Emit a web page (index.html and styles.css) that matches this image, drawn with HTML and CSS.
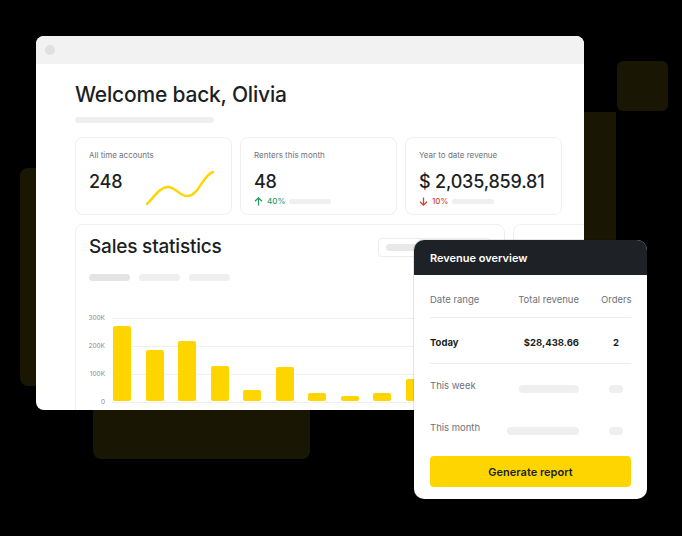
FILE: index.html
```html
<!DOCTYPE html>
<html lang="en">
<head>
    <meta charset="UTF-8">
    <meta name="viewport" content="width=device-width, initial-scale=1.0">
    <title>Welcome back, Olivia</title>
    <link rel="stylesheet" href="styles.css">
</head>
<body>

<div class="stage">
    <!-- dim yellow blocks behind the windows -->
    <div class="block block-square"></div>
    <div class="block block-column"></div>
    <div class="block block-left"></div>
    <div class="block block-bottom"></div>

    <div class="window">
        <div class="window-bar"><span class="dot"></span></div>
        <div class="content">
            <h1>Welcome back, Olivia</h1>
            <div class="skel skel-sub"></div>

            <div class="stats">
                <div class="stat">
                    <div class="stat-label">All time accounts</div>
                    <div class="stat-main">
                        <div class="stat-value">248</div>
                        <svg class="spark" width="72" height="38" viewBox="0 0 72 38">
                            <path d="M2 35 C9 28 15 18 23 18 C31 18 35 28 43 27 C54 26 58 6 68 3" fill="none" stroke="#ffd500" stroke-width="2.4" stroke-linecap="round"/>
                        </svg>
                    </div>
                </div>
                <div class="stat">
                    <div class="stat-label">Renters this month</div>
                    <div class="stat-value">48</div>
                    <div class="stat-change up">
                        <svg width="9" height="9" viewBox="0 0 9 9"><path d="M4.5 8.5 V1 M1 4.3 L4.5 0.9 L8 4.3" fill="none" stroke="currentColor" stroke-width="1.3"/></svg>
                        <span>40%</span>
                        <div class="skel skel-change"></div>
                    </div>
                </div>
                <div class="stat">
                    <div class="stat-label">Year to date revenue</div>
                    <div class="stat-value">$ 2,035,859.81</div>
                    <div class="stat-change down">
                        <svg width="9" height="9" viewBox="0 0 9 9"><path d="M4.5 0.5 V8 M1 4.7 L4.5 8.1 L8 4.7" fill="none" stroke="currentColor" stroke-width="1.3"/></svg>
                        <span>10%</span>
                        <div class="skel skel-change"></div>
                    </div>
                </div>
            </div>

            <div class="row2">
                <div class="sales">
                    <div class="sales-head">
                        <h2>Sales statistics</h2>
                        <div class="fake-select"><div class="skel skel-select"></div></div>
                    </div>
                    <div class="tabs">
                        <div class="skel tab tab-active"></div>
                        <div class="skel tab"></div>
                        <div class="skel tab"></div>
                    </div>
                    <div class="chart">
                        <div class="axis">
                            <span>300K</span>
                            <span>200K</span>
                            <span>100K</span>
                            <span>0</span>
                        </div>
                        <div class="plot">
                            <div class="bar" style="height: 75px"></div>
                            <div class="bar" style="height: 51px"></div>
                            <div class="bar" style="height: 60px"></div>
                            <div class="bar" style="height: 35px"></div>
                            <div class="bar" style="height: 11px"></div>
                            <div class="bar" style="height: 34px"></div>
                            <div class="bar" style="height: 8px"></div>
                            <div class="bar" style="height: 5px"></div>
                            <div class="bar" style="height: 8px"></div>
                            <div class="bar" style="height: 22px"></div>
                            <div class="bar" style="height: 44px"></div>
                            <div class="bar" style="height: 58px"></div>
                        </div>
                    </div>
                </div>
                <div class="side"></div>
            </div>
        </div>
    </div>

    <div class="revenue">
        <div class="revenue-head">Revenue overview</div>
        <div class="revenue-body">
            <div class="rev-row rev-labels">
                <span>Date range</span>
                <span class="num">Total revenue</span>
                <span class="mid">Orders</span>
            </div>
            <div class="rev-row rev-today">
                <span>Today</span>
                <span class="num">$28,438.66</span>
                <span class="mid">2</span>
            </div>
            <div class="rev-row rev-muted">
                <span>This week</span>
                <div class="skel skel-rev skel-week"></div>
                <div class="skel skel-rev skel-dot"></div>
            </div>
            <div class="rev-row rev-muted">
                <span>This month</span>
                <div class="skel skel-rev skel-month"></div>
                <div class="skel skel-rev skel-dot"></div>
            </div>
            <button class="report">Generate report</button>
        </div>
    </div>
</div>

</body>
</html>
```

FILE: styles.css
```css
body {
    margin: 0;
    background: #000;
    font-family: Inter, "Liberation Sans", sans-serif;
    color: #1c1f24;
}
.stage {
    position: relative;
    width: 682px;
    height: 536px;
    padding: 36px 0 0 36px;
    box-sizing: border-box;
    overflow: hidden;
    background: #000;
}

/* background blocks */
.block {
    position: absolute;
    background: #191604;
}
.block-square {
    left: 617px;
    top: 61px;
    width: 51px;
    height: 50px;
    border-radius: 6px;
}
.block-column {
    left: 580px;
    top: 112px;
    width: 36px;
    height: 140px;
}
.block-left {
    left: 20px;
    top: 168px;
    width: 30px;
    height: 218px;
    border-radius: 8px 0 0 8px;
}
.block-bottom {
    left: 93px;
    top: 400px;
    width: 217px;
    height: 59px;
    border-radius: 0 0 8px 8px;
}

/* main window */
.window {
    position: relative;
    z-index: 1;
    width: 548px;
    height: 374px;
    background: #fff;
    border-radius: 8px;
    overflow: hidden;
}
.window-bar {
    height: 28px;
    background: #f2f2f2;
    display: flex;
    align-items: center;
    padding-left: 9px;
}
.dot {
    width: 10px;
    height: 10px;
    border-radius: 50%;
    background: #e0e0e0;
}
.content {
    padding: 17px 0 0 39px;
}
h1 {
    margin: 0;
    font-size: 21px;
    line-height: 28px;
    font-weight: 500;
    letter-spacing: -0.2px;
}
.skel {
    background: #efefef;
    border-radius: 4px;
}
.skel-sub {
    margin-top: 8px;
    width: 139px;
    height: 6px;
}

/* stat cards */
.stats {
    margin-top: 14px;
    display: grid;
    grid-template-columns: 157px 157px 157px;
    gap: 8px;
}
.stat {
    height: 78px;
    box-sizing: border-box;
    border: 1px solid #efefef;
    border-radius: 8px;
    padding: 12px 12px 0 13px;
}
.stat-label {
    font-size: 8px;
    line-height: 10px;
    color: #6e7279;
}
.stat-value {
    margin-top: 11px;
    font-size: 18px;
    line-height: 22px;
    font-weight: 500;
    letter-spacing: -0.2px;
}
.stat-main {
    display: flex;
    align-items: flex-start;
}
.spark {
    margin-left: 23px;
    margin-top: 9px;
}
.stat-change {
    margin-top: 3px;
    display: flex;
    align-items: center;
    font-size: 8px;
    line-height: 10px;
    font-weight: 500;
}
.stat-change span {
    margin-left: 4px;
}
.up {
    color: #1f9968;
}
.down {
    color: #d6402c;
}
.skel-change {
    margin-left: 4px;
    width: 42px;
    height: 5px;
}

/* sales statistics */
.row2 {
    margin-top: 9px;
    display: flex;
    gap: 8px;
    width: 560px;
}
.sales {
    width: 430px;
    height: 220px;
    box-sizing: border-box;
    border: 1px solid #efefef;
    border-radius: 8px;
    padding: 10px 13px 0 13px;
    flex-shrink: 0;
}
.side {
    width: 110px;
    height: 220px;
    border: 1px solid #efefef;
    border-radius: 8px;
    flex-shrink: 0;
}
.sales-head {
    display: flex;
    justify-content: space-between;
    align-items: center;
}
h2 {
    margin: 0;
    font-size: 19px;
    line-height: 24px;
    font-weight: 500;
    letter-spacing: -0.2px;
}
.fake-select {
    width: 113px;
    height: 19px;
    box-sizing: border-box;
    border: 1px solid #ededed;
    border-radius: 4px;
    display: flex;
    align-items: center;
    padding-left: 7px;
}
.skel-select {
    width: 60px;
    height: 7px;
    background: #e8e8e8;
}
.tabs {
    margin-top: 15px;
    display: flex;
    gap: 9px;
}
.tab {
    width: 41px;
    height: 7px;
}
.tab-active {
    background: #e4e4e4;
}
.chart {
    margin-top: 33px;
    display: flex;
}
.axis {
    width: 16px;
    height: 92px;
    display: flex;
    flex-direction: column;
    justify-content: space-between;
    align-items: flex-end;
    font-size: 6.5px;
    line-height: 8px;
    color: #85888e;
}
.plot {
    margin: 4px 0 0 7px;
    width: 400px;
    height: 85px;
    box-sizing: border-box;
    padding: 0 0 2px 1px;
    background-image: linear-gradient(#f0f0f0 1px, transparent 1px);
    background-size: 100% 28px;
    display: flex;
    align-items: flex-end;
    gap: 14.5px;
}
.bar {
    width: 18px;
    background: #ffd500;
    border-radius: 2px;
    flex-shrink: 0;
}

/* revenue overview card */
.revenue {
    position: absolute;
    z-index: 2;
    left: 414px;
    top: 240px;
    width: 233px;
    background: #fff;
    border-radius: 10px;
    overflow: hidden;
    box-shadow: 0 0 0 1px rgba(0, 0, 0, 0.1);
}
.revenue-head {
    height: 35px;
    background: #1e2227;
    color: #fff;
    font-size: 11px;
    font-weight: 600;
    display: flex;
    align-items: center;
    padding-left: 16px;
}
.revenue-body {
    padding: 8px 16px 12px 16px;
}
.rev-row {
    display: grid;
    grid-template-columns: 1fr 72px 30px;
    column-gap: 22px;
    font-size: 9.5px;
    line-height: 12px;
}
.rev-row .num {
    text-align: right;
}
.rev-row .mid {
    text-align: center;
}
.rev-labels {
    color: #6e7279;
    padding: 11px 0;
    border-bottom: 1px solid #ececec;
}
.rev-today {
    font-weight: 700;
    padding: 19px 0 14px;
    border-bottom: 1px solid #ececec;
}
.rev-muted {
    color: #6e7279;
    padding-top: 16px;
    align-items: start;
}
.rev-muted + .rev-muted {
    padding-top: 29px;
}
.skel-rev {
    margin-top: 5px;
    height: 8px;
    justify-self: end;
}
.skel-week {
    width: 60px;
}
.skel-month {
    width: 72px;
}
.skel-dot {
    width: 14px;
    justify-self: center;
}
.report {
    margin-top: 21px;
    width: 100%;
    height: 31px;
    border: none;
    border-radius: 4px;
    background: #ffd500;
    font-family: inherit;
    font-size: 11px;
    font-weight: 600;
    color: #1c1f24;
}
```
